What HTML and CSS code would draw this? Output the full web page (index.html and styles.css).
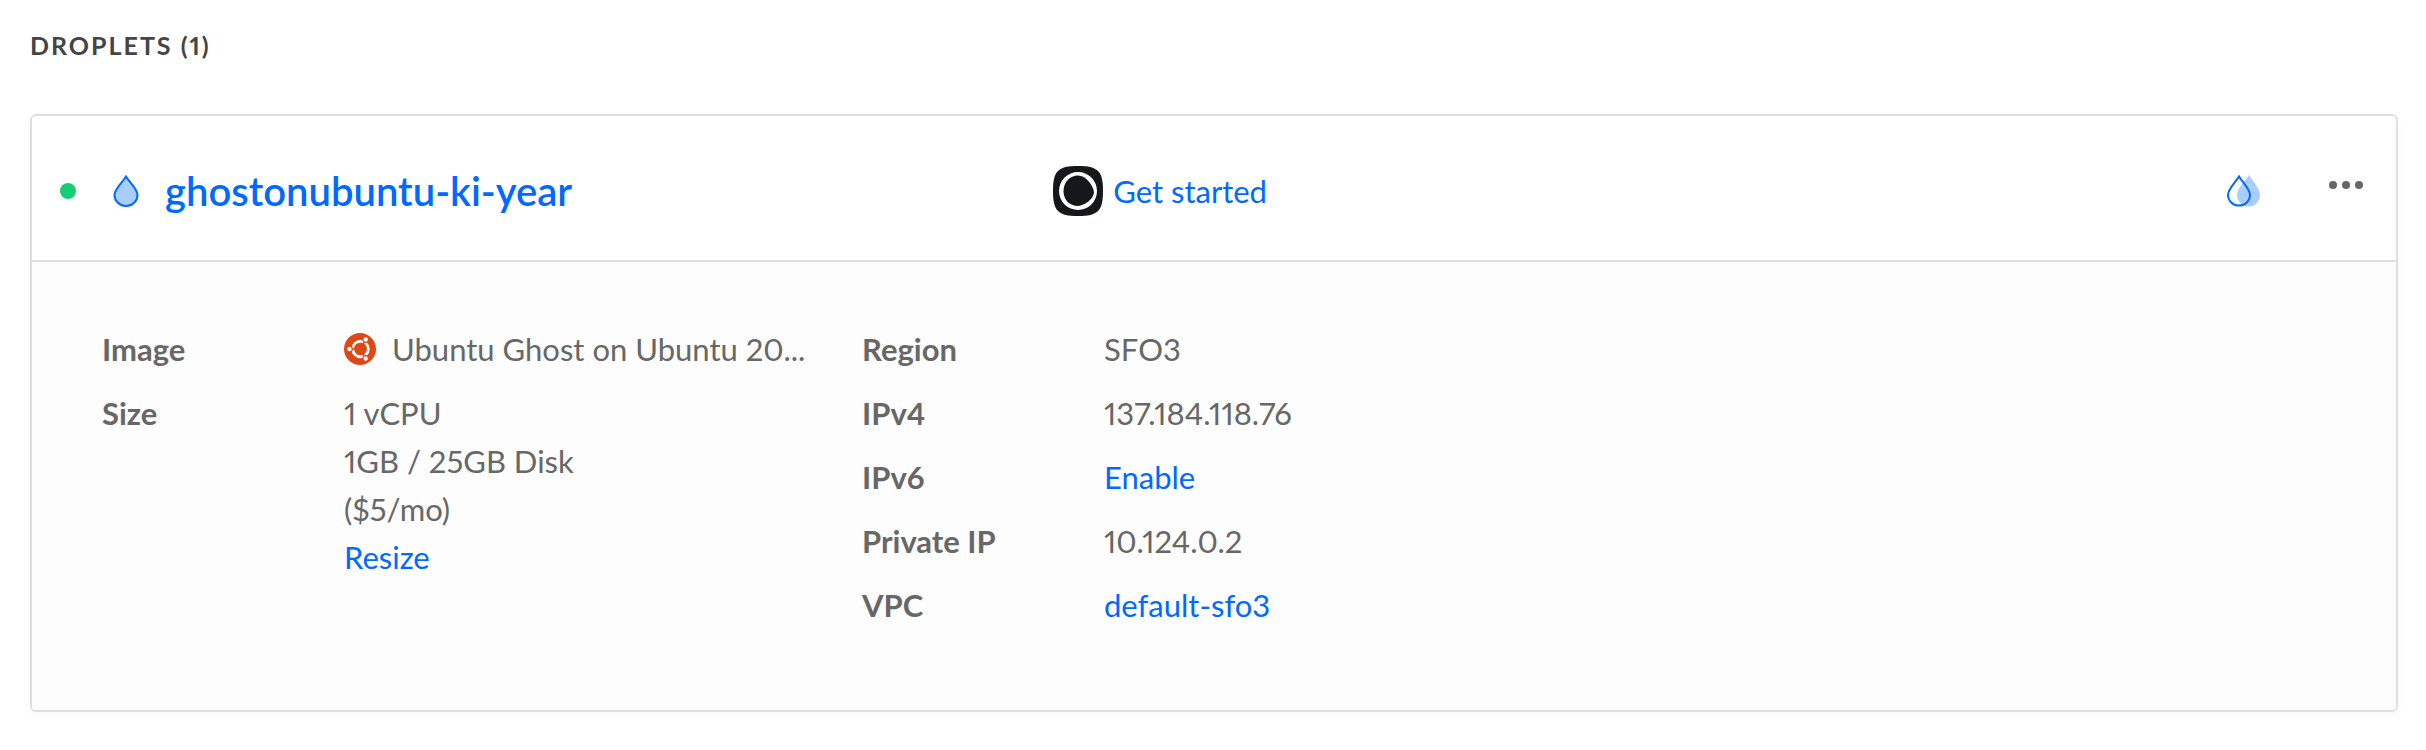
FILE: index.html
```html
<!DOCTYPE html>
<html lang="en">
<head>
<meta charset="utf-8">
<title>Droplets</title>
<link rel="stylesheet" href="styles.css">
</head>
<body>
<main class="page">
  <h1 class="section-title">Droplets (1)</h1>
  <section class="card">
    <header class="card-header">
      <div class="identity">
        <span class="status" role="img" aria-label="Active"></span>
        <svg class="drop-icon" viewBox="0 0 26 32" aria-hidden="true">
          <path d="M13 1.500C9.500 7.500 1.500 14 1.500 20a11.500 11 0 0 0 23 0C24.500 14 16.500 7.500 13 1.500Z" fill="#aacdff" stroke="#0069ff" stroke-width="2"/>
        </svg>
        <a class="name" href="#">ghostonubuntu-ki-year</a>
      </div>
      <div class="start">
        <svg class="ghost-icon" viewBox="0 0 50 50" aria-hidden="true">
          <path d="M25 0C45 0 50 5 50 25S45 50 25 50 0 45 0 25 5 0 25 0Z" fill="#15171a"/>
          <path fill-rule="evenodd" d="M25 6A19 19 0 1 1 25 44A19 19 0 1 1 25 6ZM25 9.500C33 9.500 40 19 41 26C41 33 31 40 24 40C16 39.500 10.500 33 10.500 25.500C10.500 16 17 9.500 25 9.500Z" fill="#fff"/>
        </svg>
        <a href="#">Get started</a>
      </div>
      <div class="actions">
        <button class="icon-button" type="button" aria-label="Create similar Droplet">
          <svg class="copy-icon" viewBox="0 0 34 32" aria-hidden="true">
            <path d="M22 0C18.500 6 10 13 10 20a11.500 11.500 0 0 0 23 0C33 13 25.500 6 22 0Z" fill="#aacdff"/>
            <path d="M12 1.500C8.500 7.500 1 14 1 20a11 10.500 0 0 0 22 0C23 14 15.500 7.500 12 1.500Z" fill="none" stroke="#0069ff" stroke-width="2"/>
          </svg>
        </button>
        <button class="icon-button more" type="button" aria-label="More">
          <svg class="more-icon" viewBox="0 0 34 8" aria-hidden="true">
            <g fill="#676767"><circle cx="4" cy="4" r="4"/><circle cx="17" cy="4" r="4"/><circle cx="30" cy="4" r="4"/></g>
          </svg>
        </button>
      </div>
    </header>
    <div class="details">
      <dl class="facts">
        <dt>Image</dt>
        <dd class="image">
          <svg class="ubuntu-icon" viewBox="0 0 32 32" aria-hidden="true">
            <circle cx="16" cy="16" r="16" fill="#dd4814"/>
            <circle cx="16.500" cy="16" r="7.700" fill="none" stroke="#fff" stroke-width="3"/>
            <g stroke="#dd4814" stroke-width="1.500"><path d="M16.500 16H4M16.500 16 23 4.700M16.500 16 23 27.300"/></g>
            <circle cx="16.500" cy="16" r="6.200" fill="#dd4814"/>
            <g fill="#fff" stroke="#dd4814" stroke-width="1.200"><circle cx="5.500" cy="16" r="2.800"/><circle cx="21.700" cy="6.500" r="2.800"/><circle cx="21.700" cy="25.500" r="2.800"/></g>
          </svg>
          <span>Ubuntu Ghost on Ubuntu 20...</span>
        </dd>
        <dt>Size</dt>
        <dd>1 vCPU<br>1GB / 25GB Disk<br>($5/mo)<br><a href="#">Resize</a></dd>
      </dl>
      <dl class="facts">
        <dt>Region</dt><dd>SFO3</dd>
        <dt>IPv4</dt><dd>137.184.118.76</dd>
        <dt>IPv6</dt><dd><a href="#">Enable</a></dd>
        <dt>Private IP</dt><dd>10.124.0.2</dd>
        <dt>VPC</dt><dd><a href="#">default-sfo3</a></dd>
      </dl>
    </div>
  </section>
</main>
</body>
</html>
```
FILE: styles.css
```css
* {
  box-sizing: border-box;
}

body {
  margin: 0;
  background: #fff;
  color: #676767;
  font-family: Lato, "Open Sans", sans-serif;
  font-size: 31px;
  font-variant-numeric: proportional-nums;
  line-height: 48px;
}

a {
  color: #0069ff;
  text-decoration: none;
}

.page {
  padding: 21px 28px 38px 30px;
}

.section-title {
  margin: 0 0 45px;
  color: #444;
  font-size: 25px;
  font-weight: 700;
  letter-spacing: 2px;
  text-transform: uppercase;
}

.card {
  background: #fff;
  border: 2px solid #dfdfdf;
  border-radius: 6px;
  box-shadow: 0 4px 8px rgba(0, 0, 0, 0.03);
}

.card-header {
  display: grid;
  grid-template-columns: minmax(0, 11fr) minmax(0, 13fr) auto;
  align-items: center;
  min-height: 146px;
  padding: 5px 33px 0 28px;
  border-bottom: 2px solid #dfdfdf;
}

.identity,
.start,
.actions {
  display: flex;
  align-items: center;
}

.status {
  width: 16px;
  height: 16px;
  border-radius: 50%;
  background: #15cd72;
}

.drop-icon {
  width: 26px;
  height: 32px;
  margin: 0 26px 0 37px;
}

.name {
  font-size: 40px;
  font-weight: 600;
}

.start {
  gap: 10px;
}

.ghost-icon {
  width: 50px;
  height: 50px;
}

.actions {
  gap: 68px;
}

.icon-button {
  display: flex;
  padding: 0;
  border: 0;
  background: none;
  cursor: pointer;
}

.more {
  padding-bottom: 12px;
}

.copy-icon {
  width: 34px;
  height: 32px;
}

.more-icon {
  width: 34px;
  height: 8px;
}

.details {
  display: grid;
  grid-template-columns: repeat(3, minmax(0, 1fr));
  padding: 63px 14px 81px 70px;
  border-radius: 0 0 4px 4px;
  background: #fdfdfd;
}

.facts {
  display: grid;
  grid-template-columns: 242px minmax(0, 1fr);
  row-gap: 16px;
  align-content: start;
  margin: 0;
}

dt {
  font-weight: 700;
}

dd {
  margin: 0;
}

.image {
  display: flex;
  align-items: center;
  gap: 16px;
  white-space: nowrap;
}

.ubuntu-icon {
  flex: none;
  width: 32px;
  height: 32px;
}
```
